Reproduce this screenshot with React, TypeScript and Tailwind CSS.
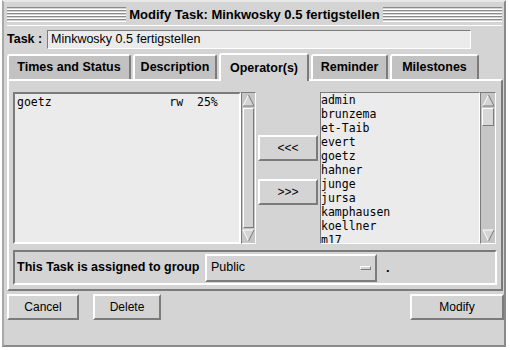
import React from "react";

const raised = "border border-t-white border-l-white border-r-[#7b7b7b] border-b-[#7b7b7b]";
const sunken = "border border-t-[#7b7b7b] border-l-[#7b7b7b] border-r-white border-b-white";

const tabs = [
  { label: "Times and Status", w: "w-[124px]" },
  { label: "Description", w: "w-[84px]" },
  { label: "Operator(s)", w: "w-[90px]", active: true },
  { label: "Reminder", w: "w-[77px]" },
  { label: "Milestones", w: "w-[89px]" },
];

const users = [
  "admin",
  "brunzema",
  "et-Taib",
  "evert",
  "goetz",
  "hahner",
  "junge",
  "jursa",
  "kamphausen",
  "koellner",
  "m17",
];

const Stripes = () => (
  <div className="flex flex-1 flex-col">
    {[0, 1, 2, 3, 4].map((i) => (
      <div key={i} className="h-[3px] border-t border-b border-t-[#8a8a8a] border-b-white" />
    ))}
  </div>
);

const Arrow = ({ down }: { down?: boolean }) => (
  <svg width="13" height="13" viewBox="0 0 13 13" className="shrink-0">
    {down ? (
      <>
        <polygon points="1,1 12,1 6.5,12" fill="#d4d4d4" />
        <line x1="1" y1="1" x2="12" y2="1" stroke="#ffffff" />
        <line x1="1" y1="1" x2="6.5" y2="12" stroke="#ffffff" />
        <line x1="12" y1="1" x2="6.5" y2="12" stroke="#7b7b7b" />
      </>
    ) : (
      <>
        <polygon points="6.5,1 12,12 1,12" fill="#d4d4d4" />
        <line x1="6.5" y1="1" x2="1" y2="12" stroke="#ffffff" />
        <line x1="6.5" y1="1" x2="12" y2="12" stroke="#7b7b7b" />
        <line x1="1" y1="12" x2="12" y2="12" stroke="#7b7b7b" />
      </>
    )}
  </svg>
);

const ScrollBar = ({ w, thumb }: { w: string; thumb?: boolean }) => (
  <div className={`${w} flex h-full flex-col items-center bg-[#c6c6c6] py-[1px] ${sunken}`}>
    <Arrow />
    <div className="flex w-full flex-1 flex-col px-[1px] py-[1px]">
      {thumb ? (
        <div className={`h-[18px] bg-[#d8d8d8] ${raised}`} />
      ) : (
        <div className={`flex-1 bg-[#d2d2d2] ${raised}`} />
      )}
    </div>
    <Arrow down />
  </div>
);

const Button = ({ label, w }: { label: string; w: string }) => (
  <div className={`${w} flex h-full items-center justify-center bg-[#d4d4d4] text-[12px] text-black border-2 border-t-white border-l-white border-r-[#7b7b7b] border-b-[#7b7b7b]`}>
    {label}
  </div>
);

export default function App() {
  return (
    <div className="h-[350px] w-[510px] bg-white font-['Liberation_Sans',Arial,sans-serif] text-black">
      <div className="ml-[2px] flex h-[347px] w-[504px] flex-col border-2 border-t-[#e8e8e8] border-l-[#a8a8a8] border-r-[#8a8a8a] border-b-[#8a8a8a] bg-[#d4d4d4] pl-[3px] pr-[2px]">
        {/* title bar */}
        <div className="mt-[2px] flex h-[22px] items-center gap-[3px] border-b border-white">
          <Stripes />
          <div className="text-[13px] font-bold leading-none">Modify Task: Minkwosky 0.5 fertigstellen</div>
          <Stripes />
        </div>

        {/* task row */}
        <div className="mt-[4px] flex h-[19px] items-center">
          <span className="w-[40px] text-[12.5px] font-bold">Task :</span>
          <div className={`flex h-[19px] w-[424px] items-center bg-[#ebebeb] pl-[3px] text-[12.5px] ${sunken}`}>
            Minkwosky 0.5 fertigstellen
          </div>
        </div>

        {/* tabs */}
        <div className="relative z-10 mt-[4px] flex h-[26px] items-end gap-[2px]">
          {tabs.map((t) =>
            t.active ? (
              <div
                key={t.label}
                className={`${t.w} -mb-[2px] flex h-[28px] items-center justify-center rounded-t-[3px] border-2 border-b-0 border-t-white border-l-white border-r-[#7b7b7b] bg-[#d4d4d4] text-[12.5px] font-bold`}
              >
                {t.label}
              </div>
            ) : (
              <div
                key={t.label}
                className={`${t.w} flex h-[25px] items-center justify-center rounded-t-[3px] border-2 border-b-0 border-t-white border-l-white border-r-[#7b7b7b] bg-[#c2c2c2] text-[12.5px] font-bold`}
              >
                {t.label}
              </div>
            )
          )}
        </div>

        {/* panel */}
        <div className="flex h-[212px] w-[496px] flex-col border-2 border-t-white border-l-white border-r-[#7b7b7b] border-b-[#7b7b7b] px-[4px] pt-[11px]">
          <div className="flex h-[152px]">
            <div className={`w-[228px] h-full bg-[#ebebeb] pl-[2px] pt-[1px] font-['DejaVu_Sans_Mono',monospace] text-[11.5px] leading-[14px] whitespace-pre border-2 border-t-[#7b7b7b] border-l-[#7b7b7b] border-r-white border-b-white`}>
              {"goetz                 rw  25%"}
            </div>
            <ScrollBar w="w-[15px]" />
            <div className="flex w-[64px] flex-col items-center pt-[43px]">
              <div className="h-[26px]">
                <Button label="<<<" w="w-[60px]" />
              </div>
              <div className="mt-[18px] h-[26px]">
                <Button label=">>>" w="w-[60px]" />
              </div>
            </div>
            <div className="h-full w-[160px] overflow-hidden border border-t-[#7b7b7b] border-l-[#7b7b7b] border-r-white border-b-white bg-[#ebebeb] font-['DejaVu_Sans_Mono',monospace] text-[11.5px] leading-[14px]">
              {users.map((u) => (
                <div key={u} className="h-[14px]">
                  {u}
                </div>
              ))}
            </div>
            <ScrollBar w="w-[16px]" thumb />
          </div>

          {/* group row */}
          <div className="mt-[6px] flex h-[35px] items-center border-2 border-t-[#7b7b7b] border-l-[#7b7b7b] border-r-white border-b-white pl-[2px]">
            <span className="w-[188px] text-[12.5px] font-bold">This Task is assigned to group</span>
            <div className="flex h-[28px] w-[172px] items-center justify-between border-2 border-t-white border-l-white border-r-[#7b7b7b] border-b-[#7b7b7b] pl-[4px] pr-[4px] text-[12.5px]">
              <span>Public</span>
              <div className="h-[4px] w-[11px] border border-t-white border-l-white border-r-[#7b7b7b] border-b-[#7b7b7b] bg-[#d4d4d4]" />
            </div>
            <span className="ml-[9px] text-[13px] font-bold">.</span>
          </div>
        </div>

        {/* bottom buttons */}
        <div className="mt-[3px] flex h-[26px]">
          <Button label="Cancel" w="w-[72px]" />
          <div className="ml-[14px] h-full">
            <Button label="Delete" w="w-[68px]" />
          </div>
          <div className="-mr-[2px] ml-auto h-full">
            <Button label="Modify" w="w-[94px]" />
          </div>
        </div>
      </div>
    </div>
  );
}
